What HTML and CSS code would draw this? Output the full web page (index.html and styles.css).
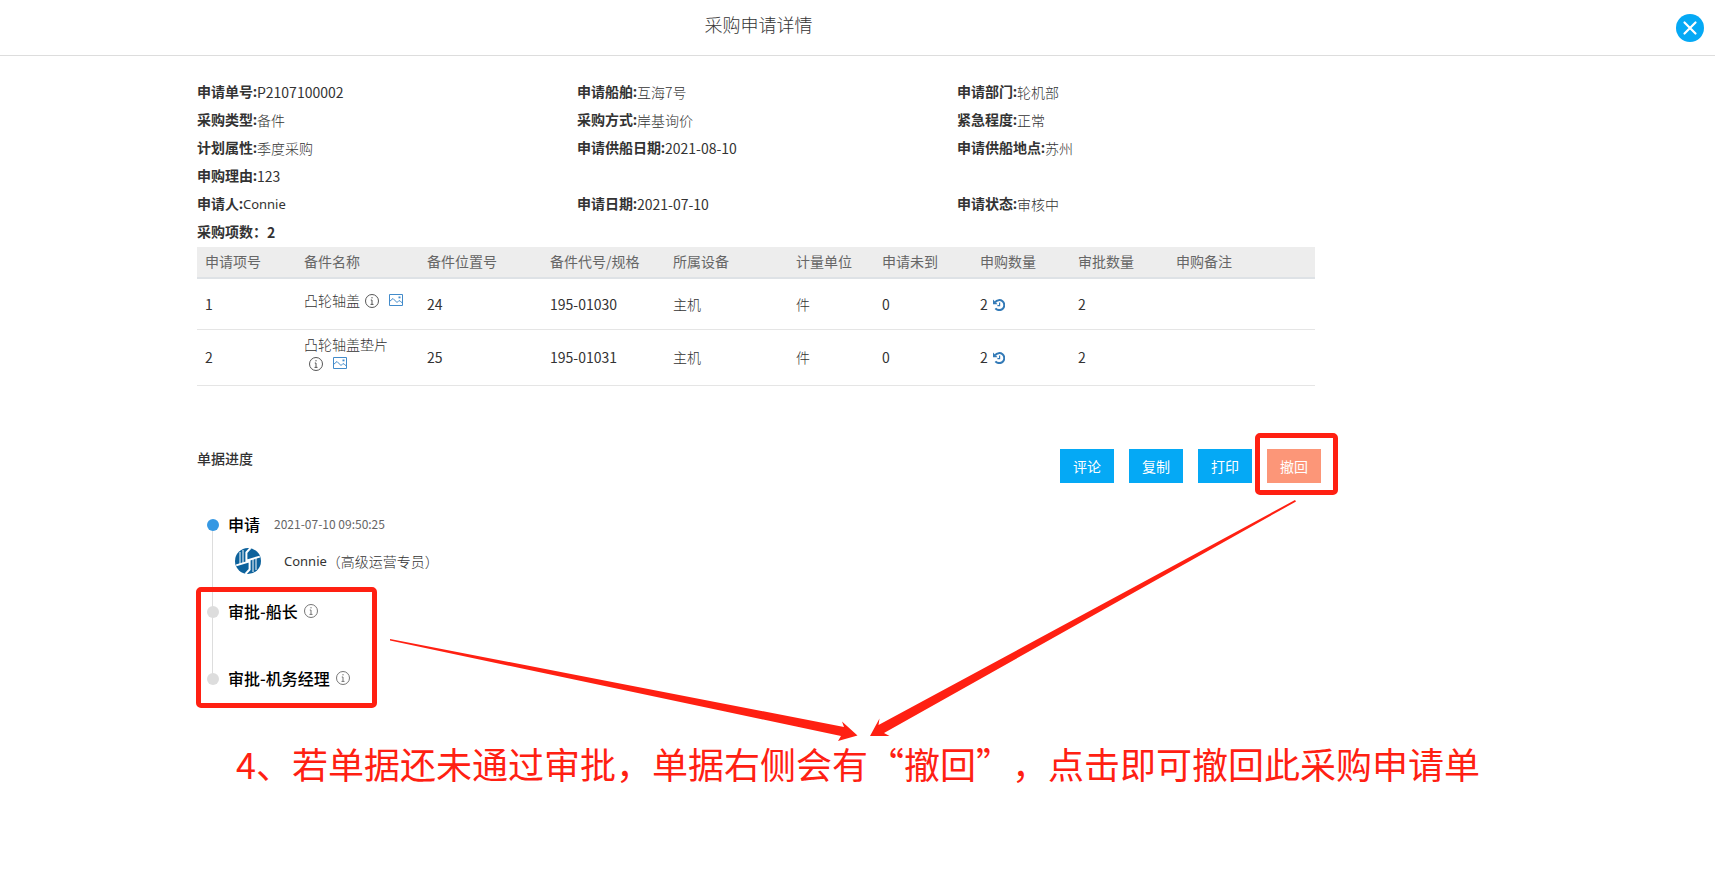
FILE: index.html
```html
<!DOCTYPE html>
<html lang="zh-CN">
<head>
<meta charset="utf-8">
<meta name="viewport" content="width=device-width, initial-scale=1">
<title>采购申请详情</title>
<link rel="stylesheet" href="styles.css">
</head>
<body>
<svg class="sprite" aria-hidden="true">
  <symbol id="info" viewBox="0 0 14 14"><circle cx="7" cy="7" r="6.5" fill="none" stroke="currentColor" stroke-width=".9"/><path d="M7 3v1.4M5.8 6H7v4.3M5.5 10.4h3" fill="none" stroke="currentColor" stroke-width=".9"/></symbol>
  <symbol id="picture" viewBox="0 0 14 12"><path d="M.5.5h13v11H.5z M.5 7.500L4 4.500l4 4 2-2 1.300.8 2.200 1.700" fill="none" stroke="currentColor"/><path d="M9.5 2.5h2v1.8h-2z" fill="currentColor"/></symbol>
  <symbol id="history" viewBox="0 0 12 12"><path d="M2.2 3.2A5 5 0 1 1 2.4 9.3" fill="none" stroke="currentColor" stroke-width="2"/><path d="M0 .6v4.6h4.6z" fill="currentColor"/><path d="M6.6 3.4v3.2H4.4" fill="none" stroke="currentColor" stroke-width="1.2"/></symbol>
</svg>
<header class="topbar">
  <h1 class="topbar-title">采购申请详情</h1>
  <button class="close" type="button" aria-label="关闭"><svg viewBox="0 0 28 28"><path d="M8.5 8.5l11 11M19.5 8.5l-11 11" stroke="#fff" stroke-width="2.2" stroke-linecap="round"/></svg></button>
</header>
<main class="detail">
  <dl class="info">
    <div><dt>申请单号:</dt><dd class="num">P2107100002</dd></div>
    <div><dt>申请船舶:</dt><dd>互海7号</dd></div>
    <div><dt>申请部门:</dt><dd>轮机部</dd></div>
    <div><dt>采购类型:</dt><dd>备件</dd></div>
    <div><dt>采购方式:</dt><dd>岸基询价</dd></div>
    <div><dt>紧急程度:</dt><dd>正常</dd></div>
    <div><dt>计划属性:</dt><dd>季度采购</dd></div>
    <div><dt>申请供船日期:</dt><dd class="num">2021-08-10</dd></div>
    <div><dt>申请供船地点:</dt><dd>苏州</dd></div>
    <div class="full"><dt>申购理由:</dt><dd class="num">123</dd></div>
    <div><dt>申请人:</dt><dd class="latin">Connie</dd></div>
    <div><dt>申请日期:</dt><dd class="num">2021-07-10</dd></div>
    <div><dt>申请状态:</dt><dd>审核中</dd></div>
    <div class="full"><dt>采购项数：</dt><dd class="total">2</dd></div>
  </dl>
  <table class="items">
    <colgroup><col class="c-no"><col class="c-wide"><col class="c-wide"><col class="c-wide"><col class="c-wide"><col class="c-unit"><col class="c-qty"><col class="c-qty"><col class="c-qty"><col></colgroup>
    <thead><tr><th>申请项号</th><th>备件名称</th><th>备件位置号</th><th>备件代号/规格</th><th>所属设备</th><th>计量单位</th><th>申请未到</th><th>申购数量</th><th>审批数量</th><th>申购备注</th></tr></thead>
    <tbody>
      <tr>
        <td>1</td>
        <td class="name">凸轮轴盖<span class="icons"><button type="button" aria-label="备件信息"><svg class="i-info"><use href="#info"/></svg></button><button type="button" aria-label="查看图片"><svg class="i-picture"><use href="#picture"/></svg></button></span></td>
        <td>24</td><td>195-01030</td><td class="cjk">主机</td><td class="cjk">件</td><td>0</td>
        <td>2<button class="history" type="button" aria-label="历史记录"><svg class="i-history"><use href="#history"/></svg></button></td>
        <td>2</td><td></td>
      </tr>
      <tr>
        <td>2</td>
        <td class="name">凸轮轴盖垫片<span class="icons"><button type="button" aria-label="备件信息"><svg class="i-info"><use href="#info"/></svg></button><button type="button" aria-label="查看图片"><svg class="i-picture"><use href="#picture"/></svg></button></span></td>
        <td>25</td><td>195-01031</td><td class="cjk">主机</td><td class="cjk">件</td><td>0</td>
        <td>2<button class="history" type="button" aria-label="历史记录"><svg class="i-history"><use href="#history"/></svg></button></td>
        <td>2</td><td></td>
      </tr>
    </tbody>
  </table>
  <div class="toolbar">
    <h2 class="section-title">单据进度</h2>
    <div class="actions">
      <button class="btn" type="button">评论</button>
      <button class="btn" type="button">复制</button>
      <button class="btn" type="button">打印</button>
      <div class="marked"><button class="btn btn-recall" type="button">撤回</button></div>
    </div>
  </div>
  <div class="timeline">
    <div class="step first done">
      <div class="step-title">申请<time>2021-07-10 09:50:25</time></div>
      <div class="person">
        <svg class="avatar" viewBox="0 0 26 26"><circle cx="13" cy="13" r="13" fill="#0d629c"/><path d="M5 4v12.500M8 2v13.500M18 10.500V24M21 9.500V22" stroke="#fff" stroke-width="1"/><path d="M15.500 0L11.400 4.500V12.600L24.800 8.600M10.500 26l4.100-4.500V13.400L1.200 17.400" fill="none" stroke="#fff" stroke-width="2"/></svg>
        <span class="latin">Connie</span><span class="role">（高级运营专员）</span>
      </div>
    </div>
    <div class="approvals">
      <div class="step second"><div class="step-title">审批-船长<svg class="i-info"><use href="#info"/></svg></div></div>
      <div class="step"><div class="step-title">审批-机务经理<svg class="i-info"><use href="#info"/></svg></div></div>
    </div>
  </div>
  <p class="note">4、若单据还未通过审批，单据右侧会有“撤回”，点击即可撤回此采购申请单</p>
</main>
<svg class="arrows" width="1715" height="889" viewBox="0 0 1715 889" aria-hidden="true">
  <path d="M390 639L844 727 842 721.500 857.500 735.500 838 741 841 736 390 640.500z"/>
  <path d="M1295 500L878.500 725 879.500 718.500 870 736H889.500L884 733 1296 501.500z"/>
</svg>
</body>
</html>
```
FILE: styles.css
```css
* { box-sizing: border-box; }
body {
  position: relative;
  margin: 0;
  background: #fff;
  color: #333;
  font: 14px/20px "Noto Sans CJK SC", "Noto Sans", sans-serif;
}
h1, h2, p, dl, dd { margin: 0; }
button { font: inherit; border: 0; padding: 0; background: none; cursor: pointer; }
svg { display: block; }
.sprite { position: absolute; width: 0; height: 0; }
.latin { font-family: "Noto Sans", sans-serif; font-size: 13px; }

.topbar {
  display: flex;
  align-items: center;
  height: 56px;
  padding-right: 11px;
  border-bottom: 1px solid #ddd;
}
.topbar-title {
  flex: 1;
  padding: 0 0 8px;
  margin-right: 159px;
  text-align: center;
  font-size: 18px;
  line-height: 26px;
  font-weight: 300;
  color: #333;
}
.close { width: 28px; height: 28px; border-radius: 50%; background: #05a9f5; }

.detail { margin: 22px 378px 0 197px; }
.info { display: grid; grid-template-columns: repeat(3, 1fr); line-height: 28px; }
.info > div { display: flex; }
.info .full { grid-column: 1 / -1; }
dt { font-weight: 700; color: #333; font-family: "Noto Sans", "Noto Sans CJK SC", sans-serif; }
dd { font-weight: 300; }
.info .num, .info .latin { font-weight: 400; }
.info .total { font-weight: 700; }

.items {
  width: calc(100% - 22px);
  margin-top: 1px;
  table-layout: fixed;
  border-collapse: separate;
  border-spacing: 0;
}
.c-no { width: 99px; }
.c-wide { width: 123px; }
.c-unit { width: 86px; }
.c-qty { width: 98px; }
.items th {
  height: 32px;
  padding: 0 8px 2px;
  background: #ededed;
  border-bottom: 2px solid #dee2e6;
  text-align: left;
  font-weight: 400;
  color: #666;
  white-space: nowrap;
}
.items td { height: 51px; padding: 0 8px 1px; border-bottom: 1px solid #e5e5e5; }
.items tr:last-child td { height: 56px; }
.items td.cjk, .items td.name { font-weight: 300; }
.items td.name { padding-bottom: 7px; line-height: 19px; }
.items button { display: inline-block; vertical-align: -1px; color: #337ab7; }
.items .history { margin-left: 5px; }
.icons { display: inline-block; white-space: nowrap; }
.icons button { margin: 0 5px; }
.items .icons button:first-child { color: #444; vertical-align: -2px; }
.items .icons button:last-child { margin-right: 0; color: #428bca; vertical-align: 0; }
.i-info { width: 14px; height: 14px; }
.i-picture { width: 14px; height: 12px; }
.i-history { width: 12px; height: 12px; }

.toolbar { display: flex; justify-content: space-between; margin: 62px 16px 0 0; }
.section-title { font-size: 14px; font-weight: 500; }
.actions { display: flex; gap: 15px; padding-top: 1px; }
.btn { width: 54px; height: 34px; background: #05a9f5; color: #fff; }
.btn-recall { background: #fc9678; }
.marked { position: relative; }
.marked::after, .approvals::after {
  content: "";
  position: absolute;
  border: 5px solid #ff2012;
  border-radius: 5px;
  pointer-events: none;
}
.marked::after { inset: -16px -17px -12px -12px; }

.timeline { margin-top: 29px; }
.step { position: relative; padding-left: 31px; }
.step::before {
  content: "";
  position: absolute;
  z-index: 1;
  top: 7px;
  left: 10px;
  width: 12px;
  height: 12px;
  border-radius: 50%;
  background: #ddd;
}
.step.done::before { background: #3598e3; }
.first::after, .second::after {
  content: "";
  position: absolute;
  top: 12px;
  left: 15px;
  width: 1px;
  height: 100%;
  background: #ddd;
}
.first { height: 87px; }
.second { height: 67px; }
.step-title { display: flex; align-items: center; font-size: 16px; line-height: 24px; font-weight: 500; color: #000; }
.step-title time { margin-left: 14px; font-size: 12px; font-weight: 400; color: #666; }
.step-title .i-info { margin-left: 6px; color: #666; }
.person { display: flex; align-items: center; height: 26px; margin: 12px 0 0 4px; }
.avatar { width: 26px; height: 26px; margin: 0 23px 0 3px; }
.role { font-weight: 300; }
.approvals { position: relative; width: 180px; }
.approvals::after { inset: -12px 0 -18px -1px; }

.note {
  margin: 49px 0 0 39px;
  font-size: 36px;
  line-height: 48px;
  color: #ff2012;
  white-space: nowrap;
  text-spacing-trim: space-all;
}
.arrows { position: absolute; top: 0; left: 0; fill: #ff2012; pointer-events: none; }
```
